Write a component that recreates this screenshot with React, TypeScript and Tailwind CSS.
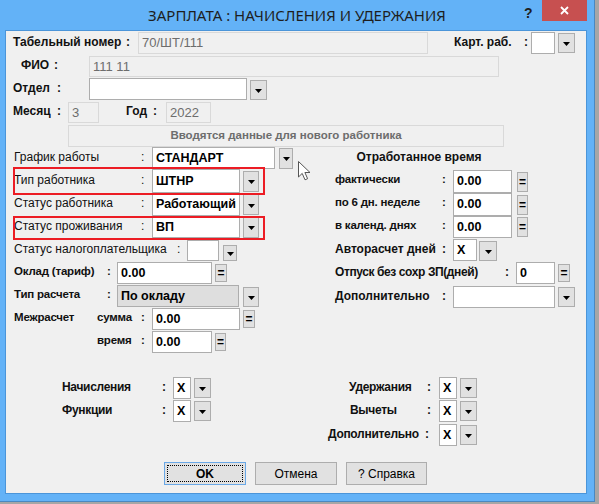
import type { ReactNode } from 'react';

const SANS = "font-['Liberation_Sans',Arial,sans-serif]";

type Kind = 'white' | 'off' | 'shade';

// поле ввода в стиле WinForms
function Box({ className = '', kind = 'white', children }: { className?: string; kind?: Kind; children?: ReactNode }) {
  const look =
    kind === 'off'
      ? 'bg-[#f0f0f0] border-[#d9d9d9] text-[#6d6d6d]'
      : kind === 'shade'
        ? 'bg-[#dedede] border-[#adadad] text-black'
        : 'bg-white border-[#adadad] text-black';
  return (
    <div className={`flex shrink-0 items-center overflow-hidden whitespace-nowrap border pl-[3px] ${look} ${className}`}>
      {children}
    </div>
  );
}

function Drop({ className = '' }: { className?: string }) {
  return (
    <div className={`flex shrink-0 items-center justify-center border border-[#adadad] bg-[#e1e1e1] ${className}`}>
      <svg width="7" height="4" viewBox="0 0 7 4" className="mt-[2px]">
        <path d="M0 0h7L3.5 4z" fill="#000" />
      </svg>
    </div>
  );
}

function Eq({ className = '' }: { className?: string }) {
  return (
    <div
      className={`flex shrink-0 items-center justify-center border border-[#adadad] bg-[#e1e1e1] text-[12px] font-bold leading-none text-black ${className}`}
    >
      =
    </div>
  );
}

function Lbl({ text, cls, tw, font = 'text-[12px] font-bold' }: { text: string; cls: string; tw: string; font?: string }) {
  return (
    <div className={`flex shrink-0 whitespace-nowrap pb-[3px] text-[#111] ${font} ${cls}`}>
      <span className={tw}>{text}</span>
      <span>:</span>
    </div>
  );
}

function RedMark({ className }: { className: string }) {
  return <div className={`pointer-events-none absolute border-2 border-[#ec1c24] ${className}`} />;
}

export default function App() {
  const reg = 'text-[12px] font-normal';
  const b11 = 'text-[11.5px] font-bold tracking-[-0.2px]';
  const val = 'text-[12.5px] font-bold';

  return (
    <div className={`h-[504px] w-[599px] overflow-hidden bg-[#a6a6a6] ${SANS}`}>
      <div className="flex h-[502px] w-[595px] flex-col border-r border-b border-[#4a88c0] bg-[#63b2f7]">
        {/* заголовок окна */}
        <div className="relative flex h-[30px] shrink-0 items-center">
          <div className="flex-1 text-center font-['Noto_Sans',sans-serif] text-[15px] text-[#1e1e1e]">
            ЗАРПЛАТА : НАЧИСЛЕНИЯ И УДЕРЖАНИЯ
          </div>
          <div className="absolute top-[3px] left-[524px] text-[14px] font-bold text-[#1e1e1e]">?</div>
          <div className="absolute top-0 left-[542px] flex h-[21px] w-[45px] items-center justify-center bg-[#c75050]">
            <svg width="9" height="9" viewBox="0 0 9 9">
              <path d="M1 1l7 7M8 1L1 8" stroke="#fff" strokeWidth="1.8" />
            </svg>
          </div>
        </div>

        {/* клиентская область */}
        <div className="relative ml-[5px] flex h-[464px] w-[582px] flex-col border border-[#4b95d9] bg-[#f0f0f0]">
          <div className="mt-[1px] flex h-[22px] items-center">
            <Lbl text="Табельный номер" cls="ml-[7px] w-[125px]" tw="w-[113px]" />
            <Box kind="off" className="h-[22px] w-[290px] text-[13px]">
              70/ШТ/111
            </Box>
            <Lbl text="Карт. раб." cls="ml-[26px] w-[77px]" tw="w-[70px]" />
            <Box className="h-[22px] w-[24px]" />
            <Drop className="ml-[3px] h-[20px] w-[17px]" />
          </div>

          <div className="mt-[2px] flex h-[21px] items-center">
            <Lbl text="ФИО" cls="ml-[15px] w-[68px]" tw="w-[33px]" />
            <Box kind="off" className="h-[21px] w-[410px] text-[13px]">
              111 11
            </Box>
          </div>

          <div className="mt-[1px] flex h-[22px] items-center">
            <Lbl text="Отдел" cls="ml-[7px] w-[76px]" tw="w-[44px]" />
            <Box className="h-[22px] w-[158px]" />
            <Drop className="ml-[3px] h-[20px] w-[17px] self-end" />
          </div>

          <div className="mt-[2px] flex h-[21px] items-center">
            <Lbl text="Месяц" cls="ml-[7px] w-[55px]" tw="w-[44px]" />
            <Box kind="off" className="h-[21px] w-[31px] text-[13px]">
              3
            </Box>
            <Lbl text="Год" cls="ml-[27px] w-[40px]" tw="w-[27px]" />
            <Box kind="off" className="h-[21px] w-[45px] text-[13px]">
              2022
            </Box>
          </div>

          <div className="mt-[2px] ml-[62px] flex h-[22px] w-[436px] items-center justify-center border border-[#d9d9d9] text-[11.5px] font-bold text-[#6d6d6d]">
            Вводятся данные для нового работника
          </div>

          {/* две колонки */}
          <div className="flex">
            <div className="ml-[8px] flex w-[321px] flex-col">
              <div className="flex h-[22px] items-center">
                <Lbl text="График работы" cls="w-[138px]" tw="w-[127px]" font={reg} />
                <Box className={`h-[22px] w-[123px] ${val}`}>СТАНДАРТ</Box>
                <Drop className="ml-[4px] h-[21px] w-[14px]" />
              </div>
              <div className="relative flex h-[24px] items-center">
                <Lbl text="Тип работника" cls="w-[138px]" tw="w-[127px]" font={reg} />
                <Box className={`h-[24px] w-[88px] ${val}`}>ШТНР</Box>
                <Drop className="ml-[3px] h-[21px] w-[16px]" />
                <RedMark className="-top-[2px] -left-[1px] h-[28px] w-[252px]" />
              </div>
              <div className="flex h-[23px] items-center">
                <Lbl text="Статус работника" cls="w-[138px]" tw="w-[127px]" font={reg} />
                <Box className={`h-[23px] w-[88px] ${val}`}>Работающий</Box>
                <Drop className="ml-[3px] h-[21px] w-[16px]" />
              </div>
              <div className="relative flex h-[22px] items-center">
                <Lbl text="Статус проживания" cls="w-[138px]" tw="w-[127px]" font={reg} />
                <Box className={`h-[22px] w-[88px] ${val}`}>ВП</Box>
                <Drop className="ml-[3px] h-[21px] w-[16px]" />
                <RedMark className="top-0 -left-[1px] h-[24px] w-[252px]" />
              </div>
              <div className="mt-[2px] flex h-[21px] items-center">
                <Lbl text="Статус налогоплательщика" cls="w-[173px]" tw="w-[163px]" font={reg} />
                <Box className="h-[21px] w-[32px]" />
                <Drop className="ml-[4px] h-[16px] w-[14px] self-end" />
              </div>
              <div className="mt-[1px] flex h-[22px] items-center">
                <Lbl text="Оклад (тариф)" cls="w-[103px]" tw="w-[93px]" font={b11} />
                <Box className={`h-[22px] w-[95px] ${val}`}>0.00</Box>
                <Eq className="ml-[3px] h-[18px] w-[12px]" />
              </div>
              <div className="mt-[1px] flex h-[22px] items-center">
                <Lbl text="Тип расчета" cls="w-[103px]" tw="w-[93px]" font={b11} />
                <Box kind="shade" className={`h-[22px] w-[122px] ${val}`}>
                  По окладу
                </Box>
                <Drop className="ml-[4px] h-[20px] w-[16px] self-end" />
              </div>
              <div className="mt-[1px] flex h-[22px] items-center">
                <span className={`w-[83px] shrink-0 pb-[3px] text-[#111] ${b11}`}>Межрасчет</span>
                <Lbl text="сумма" cls="w-[55px]" tw="w-[44px]" font={b11} />
                <Box className={`h-[22px] w-[88px] ${val}`}>0.00</Box>
                <Eq className="ml-[3px] h-[18px] w-[12px]" />
              </div>
              <div className="mt-[1px] flex h-[22px] items-center">
                <Lbl text="время" cls="ml-[83px] w-[55px]" tw="w-[44px]" font={b11} />
                <Box className={`h-[22px] w-[60px] ${val}`}>0.00</Box>
                <Eq className="ml-[3px] h-[18px] w-[11px]" />
              </div>
            </div>

            <div className="flex flex-col">
              <div className="flex h-[23px] w-[168px] items-center justify-center pb-[3px] text-[12px] font-bold text-[#111]">
                Отработанное время
              </div>
              <div className="flex h-[23px] items-center">
                <Lbl text="фактически" cls="w-[118px]" tw="w-[107px]" font={b11} />
                <Box className={`h-[23px] w-[59px] ${val}`}>0.00</Box>
                <Eq className="ml-[5px] h-[20px] w-[11px]" />
              </div>
              <div className="flex h-[23px] items-center">
                <Lbl text="по 6 дн. неделе" cls="w-[118px]" tw="w-[107px]" font={b11} />
                <Box className={`h-[23px] w-[59px] ${val}`}>0.00</Box>
                <Eq className="ml-[5px] h-[20px] w-[11px]" />
              </div>
              <div className="flex h-[22px] items-center">
                <Lbl text="в календ. днях" cls="w-[118px]" tw="w-[107px]" font={b11} />
                <Box className={`h-[22px] w-[59px] ${val}`}>0.00</Box>
                <Eq className="ml-[5px] h-[20px] w-[11px]" />
              </div>
              <div className="mt-[1px] flex h-[22px] items-center">
                <Lbl text="Авторасчет дней" cls="w-[118px]" tw="w-[107px]" />
                <Box className={`h-[22px] w-[24px] ${val}`}>X</Box>
                <Drop className="ml-[2px] h-[20px] w-[18px] self-end" />
              </div>
              <div className="mt-[1px] flex h-[22px] items-center">
                <Lbl text="Отпуск без сохр ЗП(дней)" cls="w-[181px]" tw="w-[170px] tracking-[-0.4px]" />
                <Box className={`h-[22px] w-[39px] ${val}`}>0</Box>
                <Eq className="ml-[3px] h-[18px] w-[12px]" />
              </div>
              <div className="mt-[2px] flex h-[22px] items-center">
                <Lbl text="Дополнительно" cls="w-[118px]" tw="w-[107px]" />
                <Box className="h-[22px] w-[102px]" />
                <Drop className="ml-[3px] h-[20px] w-[17px]" />
              </div>
            </div>
          </div>

          {/* начисления / удержания */}
          <div className="mt-[24px] flex">
            <div className="ml-[56px] flex flex-col">
              <div className="flex h-[22px] items-center">
                <Lbl text="Начисления" cls="w-[111px]" tw="w-[100px] tracking-[-0.3px]" />
                <Box className={`h-[22px] w-[18px] ${val}`}>X</Box>
                <Drop className="ml-[3px] h-[20px] w-[17px]" />
              </div>
              <div className="mt-[1px] flex h-[22px] items-center">
                <Lbl text="Функции" cls="w-[111px]" tw="w-[100px] tracking-[-0.3px]" />
                <Box className={`h-[22px] w-[18px] ${val}`}>X</Box>
                <Drop className="ml-[3px] h-[20px] w-[17px]" />
              </div>
            </div>
            <div className="ml-[117px] flex flex-col">
              <div className="flex h-[22px] items-center">
                <Lbl text="Удержания" cls="w-[111px] pl-[21px]" tw="w-[78px] tracking-[-0.3px]" />
                <Box className={`h-[22px] w-[18px] ${val}`}>X</Box>
                <Drop className="ml-[3px] h-[20px] w-[17px]" />
              </div>
              <div className="mt-[1px] flex h-[22px] items-center">
                <Lbl text="Вычеты" cls="w-[111px] pl-[22px]" tw="w-[77px] tracking-[-0.3px]" />
                <Box className={`h-[22px] w-[18px] ${val}`}>X</Box>
                <Drop className="ml-[3px] h-[20px] w-[17px]" />
              </div>
              <div className="mt-[2px] flex h-[22px] items-center">
                <Lbl text="Дополнительно" cls="w-[111px]" tw="w-[97px] tracking-[-0.3px]" />
                <Box className={`h-[22px] w-[18px] ${val}`}>X</Box>
                <Drop className="ml-[3px] h-[20px] w-[17px]" />
              </div>
            </div>
          </div>

          {/* кнопки */}
          <div className="mt-[16px] ml-[158px] flex gap-[9px] text-[12px] text-black">
            <button className="flex h-[23px] w-[82px] items-center justify-center border border-[#6aa8e6] bg-[#e1e1e1] p-[2px]">
              <span className="flex h-full w-full items-center justify-center border border-dotted border-black font-bold">
                OK
              </span>
            </button>
            <button className="h-[23px] w-[82px] border border-[#adadad] bg-[#e1e1e1]">Отмена</button>
            <button className="h-[23px] w-[81px] border border-[#adadad] bg-[#e1e1e1]">? Справка</button>
          </div>

          {/* курсор мыши */}
          <svg className="absolute top-[130px] left-[292px]" width="14" height="20" viewBox="0 0 14 20">
            <path d="M0.5 0.5V16L4.2 12.4L7 18.8L9.6 17.7L6.9 11.5H12Z" fill="#fff" stroke="#555" strokeWidth="1" />
          </svg>
        </div>
      </div>
    </div>
  );
}
